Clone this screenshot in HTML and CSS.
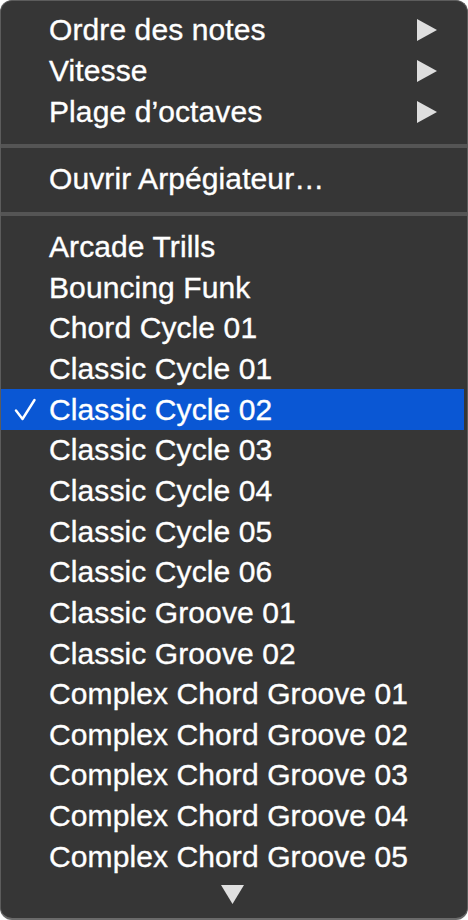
FILE: index.html
```html
<!DOCTYPE html>
<html lang="fr">
<head>
<meta charset="utf-8">
<title>Menu</title>
<link rel="stylesheet" href="styles.css">
</head>
<body>
<div class="menu">
  <div class="section top">
    <div class="item"><span class="check"></span><span class="label">Ordre des notes</span><svg class="sub" width="20" height="22" viewBox="0 0 20 22"><polygon points="0,0 20,11 0,22"/></svg></div>
    <div class="item"><span class="check"></span><span class="label">Vitesse</span><svg class="sub" width="20" height="22" viewBox="0 0 20 22"><polygon points="0,0 20,11 0,22"/></svg></div>
    <div class="item"><span class="check"></span><span class="label">Plage d’octaves</span><svg class="sub" width="20" height="22" viewBox="0 0 20 22"><polygon points="0,0 20,11 0,22"/></svg></div>
  </div>
  <div class="sep"></div>
  <div class="section">
    <div class="item"><span class="check"></span><span class="label">Ouvrir Arpégiateur…</span></div>
  </div>
  <div class="sep"></div>
  <div class="section">
    <div class="item"><span class="check"></span><span class="label">Arcade Trills</span></div>
    <div class="item"><span class="check"></span><span class="label">Bouncing Funk</span></div>
    <div class="item"><span class="check"></span><span class="label">Chord Cycle 01</span></div>
    <div class="item"><span class="check"></span><span class="label">Classic Cycle 01</span></div>
    <div class="item selected"><span class="check"><svg width="22" height="24" viewBox="0 0 22 24"><path d="M2 12.5 L8.5 21 L20.5 2" fill="none" stroke="#fff" stroke-width="2.4" stroke-linecap="round" stroke-linejoin="round"/></svg></span><span class="label">Classic Cycle 02</span></div>
    <div class="item"><span class="check"></span><span class="label">Classic Cycle 03</span></div>
    <div class="item"><span class="check"></span><span class="label">Classic Cycle 04</span></div>
    <div class="item"><span class="check"></span><span class="label">Classic Cycle 05</span></div>
    <div class="item"><span class="check"></span><span class="label">Classic Cycle 06</span></div>
    <div class="item"><span class="check"></span><span class="label">Classic Groove 01</span></div>
    <div class="item"><span class="check"></span><span class="label">Classic Groove 02</span></div>
    <div class="item"><span class="check"></span><span class="label">Complex Chord Groove 01</span></div>
    <div class="item"><span class="check"></span><span class="label">Complex Chord Groove 02</span></div>
    <div class="item"><span class="check"></span><span class="label">Complex Chord Groove 03</span></div>
    <div class="item"><span class="check"></span><span class="label">Complex Chord Groove 04</span></div>
    <div class="item"><span class="check"></span><span class="label">Complex Chord Groove 05</span></div>
  </div>
  <div class="more">
    <svg width="23" height="19" viewBox="0 0 23 19"><polygon points="0,0 23,0 11.5,19"/></svg>
  </div>
</div>
</body>
</html>
```

FILE: styles.css
```css
html, body {
  margin: 0;
  padding: 0;
  background: #ffffff;
}

.menu {
  box-sizing: border-box;
  width: 468px;
  height: 920px;
  background: #363636;
  border: 1px solid #5c5c5c;
  border-bottom: 2px solid #6a6a6a;
  border-radius: 12px;
  overflow: hidden;
  padding-top: 9px;
  display: flex;
  flex-direction: column;
  font-family: "Liberation Sans", Arial, sans-serif;
  font-size: 30px;
  color: #ffffff;
}

.item {
  display: flex;
  align-items: center;
  height: 40.67px;
}

.check {
  width: 48px;
  flex: none;
  display: flex;
  align-items: center;
  justify-content: flex-start;
  padding-left: 13px;
  box-sizing: border-box;
}

.label {
  flex: 1;
  white-space: nowrap;
  line-height: 1;
  -webkit-text-stroke: 0.35px #ffffff;
  letter-spacing: 0.1px;
}

.sub {
  flex: none;
  margin-right: 30px;
  fill: #dedede;
}

.selected {
  background: #0a57d4;
  margin-right: 3px;
}

.sep {
  height: 4px;
  background: #555555;
  margin: 12px 0 11px;
}

.more {
  display: flex;
  justify-content: center;
  padding-top: 8px;
  padding-right: 3px;
}

.more svg {
  fill: #e0e0e0;
}
```
